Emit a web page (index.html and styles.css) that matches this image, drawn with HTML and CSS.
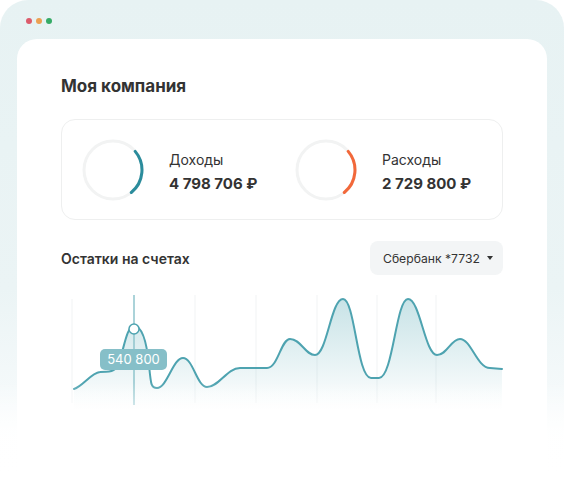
FILE: index.html
```html
<!DOCTYPE html>
<html lang="ru">
<head>
<meta charset="utf-8">
<link rel="stylesheet" href="styles.css">
</head>
<body>
<div class="frame">
  <div class="dots">
    <span class="dot red"></span><span class="dot orange"></span><span class="dot green"></span>
  </div>
  <div class="card">
    <h1 class="title">Моя компания</h1>
    <div class="stats">
      <div class="stat">
        <svg class="ring" width="62" height="62" viewBox="0 0 62 62">
          <circle cx="31" cy="31" r="29" fill="none" stroke="#f2f3f3" stroke-width="3"/>
          <path d="M53.2 12.4 A29 29 0 0 1 49.3 53.5" fill="none" stroke="#2b8c9c" stroke-width="3" stroke-linecap="round"/>
        </svg>
        <div class="stat-text">
          <div class="label">Доходы</div>
          <div class="amount">4 798 706 ₽</div>
        </div>
      </div>
      <div class="stat">
        <svg class="ring" width="62" height="62" viewBox="0 0 62 62">
          <circle cx="31" cy="31" r="29" fill="none" stroke="#f2f3f3" stroke-width="3"/>
          <path d="M53.2 12.4 A29 29 0 0 1 49.3 53.5" fill="none" stroke="#f2683a" stroke-width="3" stroke-linecap="round"/>
        </svg>
        <div class="stat-text">
          <div class="label">Расходы</div>
          <div class="amount">2 729 800 ₽</div>
        </div>
      </div>
    </div>
    <div class="section-head">
      <div class="section-title">Остатки на счетах</div>
      <div class="select">Сбербанк *7732 <span class="caret"></span></div>
    </div>
    <svg class="chart" width="442" height="135" viewBox="0 0 442 135">
      <defs>
        <linearGradient id="fillg" x1="0" y1="0" x2="0" y2="1">
          <stop offset="0" stop-color="#3a9aa8" stop-opacity="0.28"/>
          <stop offset="1" stop-color="#3a9aa8" stop-opacity="0"/>
        </linearGradient>
      </defs>
      <g stroke="#f1f3f4" stroke-width="1">
        <line x1="11" y1="14" x2="11" y2="118"/>
        <line x1="134" y1="10" x2="134" y2="118"/>
        <line x1="195" y1="10" x2="195" y2="118"/>
        <line x1="256" y1="10" x2="256" y2="118"/>
        <line x1="316" y1="10" x2="316" y2="118"/>
        <line x1="375" y1="10" x2="375" y2="118"/>
      </g>
      <path fill="url(#fillg)" d="M13,104 C22,101 30,88 39,87 C46,86 50,88 54,84 C62,76 64,41 73,41 C82,41 86,60 88,80 C90,100 90,103 96,103 C106,103 112,73 122,73 C132,73 136,102 146,102 C158,102 166,83 179,83 L206,83 C217,83 220,54 229,54 C240,54 244,70 254,70 C266,70 270,14 282,14 C294,14 296,93 310,93 L318,93 C332,93 335,14 347,14 C359,14 364,70 376,70 C386,70 390,54 399,54 C410,54 416,83 429,83 L441,84 L441,125 L13,125 Z"/>
      <line x1="73" y1="10" x2="73" y2="120" stroke="#8fc4cc" stroke-width="1.5"/>
      <path fill="none" stroke="#4ea3b0" stroke-width="2" stroke-linecap="round" d="M13,104 C22,101 30,88 39,87 C46,86 50,88 54,84 C62,76 64,41 73,41 C82,41 86,60 88,80 C90,100 90,103 96,103 C106,103 112,73 122,73 C132,73 136,102 146,102 C158,102 166,83 179,83 L206,83 C217,83 220,54 229,54 C240,54 244,70 254,70 C266,70 270,14 282,14 C294,14 296,93 310,93 L318,93 C332,93 335,14 347,14 C359,14 364,70 376,70 C386,70 390,54 399,54 C410,54 416,83 429,83 L441,84"/>
      <circle cx="73" cy="44" r="5" fill="#fff" stroke="#4ea3b0" stroke-width="1.5"/>
      <rect x="39" y="64" width="67" height="21" rx="5" fill="#86bfc8"/>
      <text x="72.5" y="79" text-anchor="middle" class="tip">540 800</text>
    </svg>
  </div>
  <div class="fade"></div>
</div>
</body>
</html>
```

FILE: styles.css
```css
* { box-sizing: border-box; }
html, body { margin: 0; padding: 0; background: #fff; }
body {
  width: 564px;
  height: 482px;
  overflow: hidden;
  font-family: Inter, "Noto Sans", sans-serif;
  color: #333;
}
.frame {
  position: relative;
  height: 482px;
  border-radius: 28px 28px 0 0;
  background: linear-gradient(180deg, #e7f2f3 0%, #ebf4f5 60%, #f6fafb 85%, #fff 100%);
}
.dots {
  display: flex;
  gap: 4px;
  height: 39px;
  padding: 18px 0 0 26px;
}
.dot { width: 6px; height: 6px; border-radius: 50%; }
.red { background: #dc5b6b; }
.orange { background: #eca052; }
.green { background: #35ab66; }
.card {
  margin: 0 17px;
  height: 443px;
  background: #fff;
  border-radius: 20px 20px 0 0;
  padding: 36px 44px 0;
}
.title {
  margin: 0;
  font-size: 17px;
  font-weight: 700;
  line-height: 22px;
  color: #333;
}
.stats {
  margin-top: 22px;
  height: 101px;
  border: 1px solid #eeefef;
  border-radius: 14px;
  display: flex;
  align-items: center;
  padding: 0 0 0 20px;
}
.stat {
  flex: none;
  width: 213px;
  display: flex;
  align-items: center;
  gap: 25px;
}
.ring { flex: none; }
.stat-text { padding-top: 5px; }
.label { font-size: 14px; line-height: 18px; color: #333; }
.amount { font-size: 15px; font-weight: 700; line-height: 20px; margin-top: 5px; color: #333; white-space: nowrap; }
.section-head {
  margin-top: 21px;
  display: flex;
  align-items: center;
  justify-content: space-between;
  height: 34px;
}
.section-title { font-size: 14px; font-weight: 600; color: #333; }
.select {
  height: 34px;
  width: 133px;
  background: #f3f5f6;
  border-radius: 8px;
  font-size: 12.2px;
  color: #333;
  display: flex;
  align-items: center;
  padding-left: 13px;
  gap: 7px;
}
.caret {
  width: 0; height: 0;
  border-left: 3.5px solid transparent;
  border-right: 3.5px solid transparent;
  border-top: 4px solid #333;
}
.chart { display: block; margin-top: 10px; }
.tip { font-family: Inter, "Noto Sans", sans-serif; font-size: 13px; fill: #fff; }
.fade {
  position: absolute;
  left: 0; right: 0; bottom: 0;
  height: 100px;
  background: linear-gradient(180deg, rgba(255,255,255,0) 0%, rgba(255,255,255,0.9) 50%, #fff 100%);
}
```
